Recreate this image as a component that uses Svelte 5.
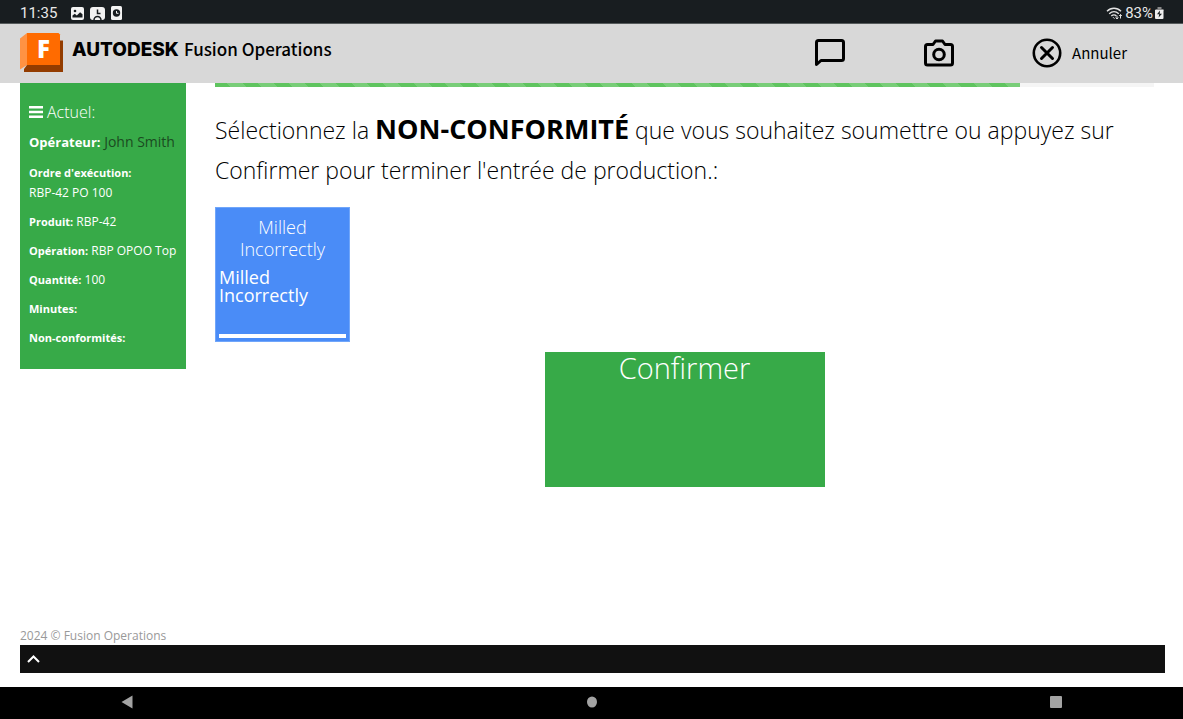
<script>
  const details = [
    { label: 'Produit:', value: 'RBP-42' },
    { label: 'Opération:', value: 'RBP OPOO Top' },
    { label: 'Quantité:', value: '100' },
    { label: 'Minutes:', value: '' },
    { label: 'Non-conformités:', value: '' }
  ];
  const progress = 85.7;
</script>

<div class="screen">
  <div class="status">
    <div class="status-left">
      <span class="clock">11:35</span>
      <svg width="13" height="13" viewBox="0 0 13 13">
        <rect width="13" height="13" rx="2" fill="#f2f2f2" />
        <circle cx="4" cy="4" r="1.3" fill="#181d20" />
        <path d="M1.5 10.5V8.5l2.3-1.7 2 1.6 3.3-3.1 2.4 2v3.2z" fill="#181d20" />
      </svg>
      <svg width="15" height="13" viewBox="0 0 15 13">
        <path d="M3 0h9q3 0 3 3v7q0 3-3 3H3q-3 0-3-3V3q0-3 3-3z" fill="#f2f2f2" />
        <path d="M7.5 2.5v4h3" fill="none" stroke="#181d20" stroke-width="1.5" />
        <path d="M4 13a3.500 3.500 0 0 1 7 0" fill="none" stroke="#181d20" stroke-width="1.500" />
      </svg>
      <svg width="11" height="14" viewBox="0 0 11 14">
        <rect width="11" height="14" rx="1.500" fill="#f2f2f2" />
        <circle cx="5.500" cy="7" r="3.700" fill="#181d20" />
        <path d="M5.500 5v2.300h2" fill="none" stroke="#f2f2f2" />
      </svg>
    </div>
    <div class="status-right">
      <svg width="17" height="13" viewBox="0 0 17 13" fill="none" stroke="#e4e4e4" stroke-width="1.400">
        <path d="M1 4.300C5 .3 11 .3 15 4.300M3.200 6.800c3-2.700 6.600-2.700 9.600 0M5.300 9c1.700-1.500 3.700-1.500 5 0" />
        <path d="M7 10.200l1.500 1.500M11 8.500v3.500M9.700 10.500l1.300 1.500 1.300-1.500M14.500 11.500V7.500M13.200 9l1.300-1.500 1.300 1.500" stroke-width="1" />
      </svg>
      <span>83%</span>
      <svg width="9" height="12" viewBox="0 0 9 12">
        <path d="M2.500 0h4v2h2v2H.5V2h2z" fill="#888" />
        <path d="M0 3h8.500v8q0 1-1 1H1q-1 0-1-1z" fill="#eee" />
        <path d="M5 3.500L2 7.300h2.200L3.600 10.500 7 6.700H4.700z" fill="#181d20" />
      </svg>
    </div>
  </div>

  <header>
    <div class="brand">
      <svg class="logo" width="43" height="40" viewBox="0 0 43 40" role="img" aria-label="Fusion">
        <path d="M0 5.500L7 0v32L0 36.500z" fill="#ff9243" />
        <path d="M4 36l3-4h33V7.500h3V39H4z" fill="#933c00" />
        <path d="M7 0h31.500L40 1.500V32H7z" fill="#ff6b00" />
        <text x="17" y="25" class="glyph">F</text>
      </svg>
      <span class="maker">AUTODESK</span>
      <span class="product">Fusion Operations</span>
    </div>
    <nav>
      <button aria-label="Commentaire">
        <svg width="32" height="30" viewBox="0 0 32 30" fill="none" stroke="#000" stroke-width="3" stroke-linejoin="round">
          <path d="M4.500 2.500h23q2 0 2 2v16q0 2-2 2H7l-4.500 4V4.500q0-2 2-2z" />
        </svg>
      </button>
      <button aria-label="Photo">
        <svg width="32" height="30" viewBox="0 0 32 30" fill="none" stroke="#000" stroke-width="3" stroke-linejoin="round">
          <path d="M4.500 6.500h5.500l2.500-3.500h7l2.500 3.500h5.500q2 0 2 2V25q0 2-2 2h-23q-2 0-2-2V8.500q0-2 2-2z" />
          <circle cx="16" cy="16.500" r="5.300" />
        </svg>
      </button>
      <button class="cancel">
        <svg width="30" height="30" viewBox="0 0 30 30" fill="none" stroke="#000">
          <circle cx="15" cy="15" r="13.200" stroke-width="2.600" />
          <path d="M9.500 9.500l11 11M20.500 9.500l-11 11" stroke-width="3" stroke-linecap="round" />
        </svg>
        <span>Annuler</span>
      </button>
    </nav>
  </header>

  <div class="body">
    <aside>
      <h2>
        <svg width="14" height="12" viewBox="0 0 14 12"><path d="M0 0h14v2.500H0zM0 4.700h14v2.500H0zM0 9.400h14v2.500H0z" fill="#fff" /></svg>
        Actuel:
      </h2>
      <p class="operator"><b>Opérateur:</b> <span>John Smith</span></p>
      <p><b>Ordre d'exécution:</b><br />RBP-42 PO 100</p>
      {#each details as d}
        <p><b>{d.label}</b> {d.value}</p>
      {/each}
    </aside>

    <main>
      <div class="track" role="progressbar" aria-label="Progression" aria-valuenow={progress}>
        <div class="fill" style="width: {progress}%"></div>
      </div>
      <h1>Sélectionnez la <b>NON-CONFORMITÉ</b> que vous souhaitez soumettre ou appuyez sur Confirmer pour terminer l'entrée de production.:</h1>
      <button class="tile">
        <span class="tile-title">Milled Incorrectly</span>
        <span class="tile-name">Milled Incorrectly</span>
        <span class="tile-bar"></span>
      </button>
      <button class="confirm">Confirmer</button>
    </main>
  </div>

  <footer>
    <p>2024 © Fusion Operations</p>
    <div class="drawer">
      <button aria-label="Ouvrir">
        <svg width="13" height="8" viewBox="0 0 13 8" fill="none" stroke="#fff" stroke-width="2"><path d="M1 7l5.500-5.500L12 7" /></svg>
      </button>
    </div>
  </footer>

  <div class="system">
    <button aria-label="Retour"><svg width="12" height="14" viewBox="0 0 12 14"><path d="M11.500.5v13L.5 7z" fill="#a3a3a3" /></svg></button>
    <button aria-label="Accueil"><svg width="10" height="12" viewBox="0 0 10 12"><ellipse cx="5" cy="6" rx="5" ry="5.500" fill="#a3a3a3" /></svg></button>
    <button aria-label="Applications"><svg width="12" height="12" viewBox="0 0 12 12"><rect width="12" height="12" rx="1" fill="#a3a3a3" /></svg></button>
  </div>
</div>

<style>
  :global(body) { background: #fff; }
  .screen {
    min-height: 100vh;
    display: flex;
    flex-direction: column;
    font-family: "Open Sans", sans-serif;
    color: #000;
  }
  button {
    border: 0;
    padding: 0;
    background: none;
    font: inherit;
    color: inherit;
    cursor: pointer;
  }
  svg { display: block; flex: none; }
  h1, h2, p { margin: 0; }

  .status {
    display: flex;
    justify-content: space-between;
    align-items: center;
    box-sizing: border-box;
    height: 24px;
    padding: 3px 19px 0 20px;
    border-bottom: 1px solid #555a5b;
    background: #181d20;
    color: #e8e8e8;
    font: 15px/20px Roboto, sans-serif;
  }
  .status-left, .status-right { display: flex; align-items: center; }
  .status-left { gap: 6px; }
  .clock { margin-right: 8px; }
  .status-right { gap: 2px; }

  header {
    display: flex;
    justify-content: space-between;
    align-items: center;
    box-sizing: border-box;
    height: 59px;
    padding: 0 56px 2px 20px;
    background: #d8d8d8;
  }
  .brand { display: flex; align-items: center; }
  .glyph { font: 800 24px "Open Sans", sans-serif; fill: #fff; }
  .maker {
    margin: 0 5px 6px 9px;
    font: 800 19px/24px Inter, sans-serif;
  }
  .product {
    margin-bottom: 7px;
    font: 500 17px/24px "Noto Sans CJK JP", sans-serif;
  }
  nav { display: flex; align-items: center; gap: 77px; }
  .cancel {
    display: flex;
    align-items: center;
    gap: 10px;
    font: 15px/24px "Noto Sans CJK JP", sans-serif;
  }

  .body {
    flex: 1;
    display: grid;
    grid-template-columns: minmax(166px, 14%) 1fr;
    align-items: start;
    gap: 29px;
    padding: 0 29px 20px 20px;
  }
  aside {
    padding: 15px 8px 12px 9px;
    background: #37aa48;
    color: #fff;
    font-size: 12px;
    line-height: 20px;
    white-space: nowrap;
  }
  aside h2 {
    display: flex;
    align-items: center;
    gap: 4px;
    font-size: 16px;
    font-weight: 300;
    line-height: 28px;
  }
  aside p { margin-bottom: 9px; }
  aside b { font-size: 11px; }
  aside .operator { margin-bottom: 5px; font-size: 14px; line-height: 32px; }
  aside .operator b { font-size: 13px; }
  .operator span { color: #1b4a21; }

  main {
    display: flex;
    flex-direction: column;
    align-items: flex-start;
  }
  .track { width: 100%; height: 4px; background: #f5f5f5; }
  .fill {
    height: 100%;
    background: repeating-linear-gradient(45deg, #5fc45f 0 11px, #78cd78 11px 22px);
  }
  h1 {
    margin: 23px 0 17px;
    font-size: 23px;
    font-weight: 300;
    line-height: 40px;
  }
  h1 b { font-size: 27px; font-weight: 700; line-height: 1; }
  .tile {
    display: flex;
    flex-direction: column;
    width: 135px;
    height: 135px;
    padding: 8px 3px 3px;
    box-sizing: border-box;
    border: 1px solid #70a6fa;
    background: #4a8cf7;
    color: #fff;
    font-size: 18px;
  }
  .tile-title { padding: 0 18px; font-weight: 300; line-height: 22px; }
  .tile-name { padding-right: 30px; margin-top: 8px; line-height: 18px; text-align: left; }
  .tile-bar { align-self: stretch; height: 4px; margin-top: auto; background: #fff; }
  .confirm {
    align-self: center;
    display: flex;
    justify-content: center;
    width: 280px;
    height: 135px;
    margin-top: 10px;
    background: #37aa48;
    color: #fff;
    font-size: 29px;
    font-weight: 300;
    line-height: 32px;
  }

  footer { padding: 0 18px 14px 20px; }
  footer p { color: #999; font-size: 12px; line-height: 18px; }
  .drawer { display: flex; height: 28px; padding: 0 7px; background: #111; }
  .system {
    display: flex;
    justify-content: space-between;
    align-items: center;
    box-sizing: border-box;
    height: 32px;
    padding: 0 10.2% 2px;
    background: #000;
  }
</style>
